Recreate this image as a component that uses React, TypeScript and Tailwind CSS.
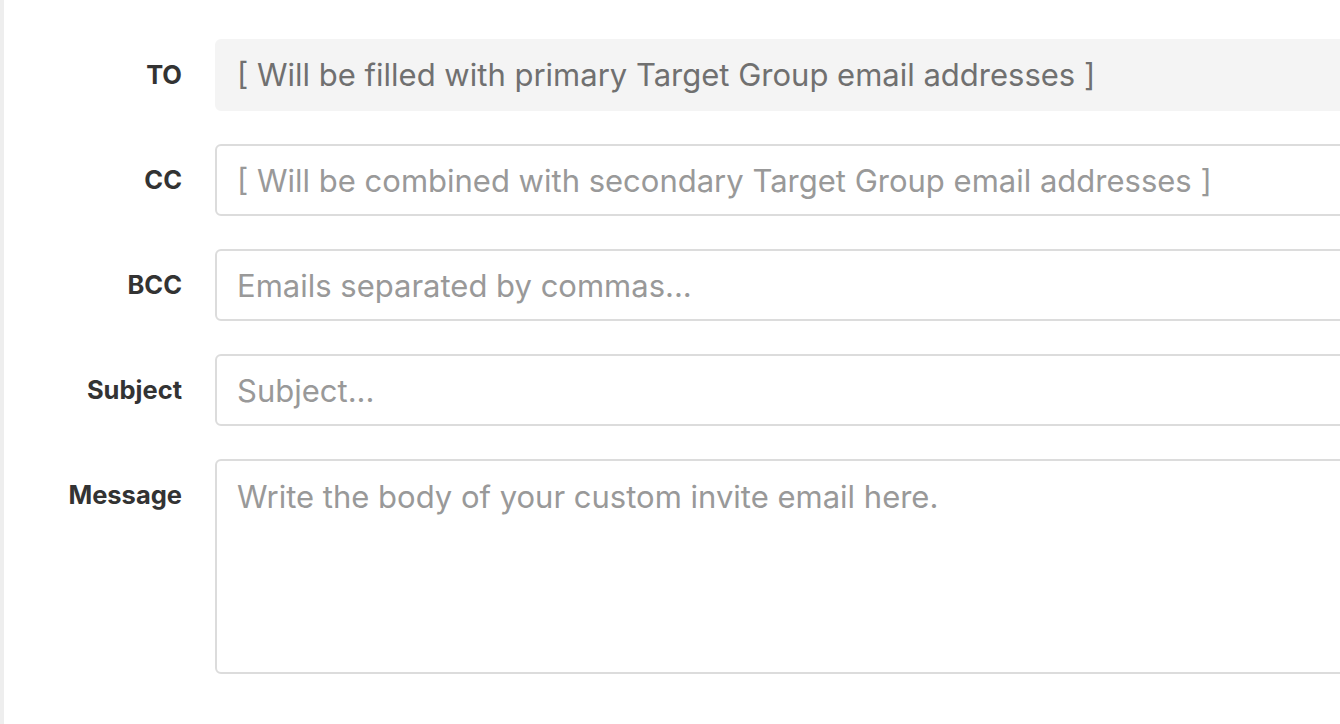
import React from "react";

const font = { fontFamily: "Inter, 'Noto Sans', sans-serif" };

function Row({ label, children }: { label: string; children: React.ReactNode }) {
  return (
    <div className="flex items-start gap-[33px]">
      <div className="w-[182px] shrink-0 h-[72px] flex items-center justify-end text-[25.5px] font-bold text-[#333333]">
        {label}
      </div>
      <div className="w-[1200px] shrink-0">{children}</div>
    </div>
  );
}

export default function App() {
  return (
    <div className="w-[1340px] h-[724px] overflow-hidden bg-white flex" style={font}>
      <div className="w-[4px] shrink-0 bg-[#eeeeee]" />
      <div className="flex flex-col gap-[33px] pt-[39px] -ml-[4px]">
        <Row label="TO">
          <div className="h-[72px] rounded-[6px] bg-[#f4f4f4] border-2 border-[#f4f4f4] px-[20px] flex items-center text-[31px] text-[#707070] whitespace-nowrap">
            [ Will be filled with primary Target Group email addresses ]
          </div>
        </Row>
        <Row label="CC">
          <input
            readOnly
            placeholder="[ Will be combined with secondary Target Group email addresses ]"
            className="h-[72px] w-full rounded-[6px] border-2 border-[#dcdcdc] px-[20px] text-[31px] outline-none placeholder:text-[#999999]"
          />
        </Row>
        <Row label="BCC">
          <input
            placeholder="Emails separated by commas..."
            className="h-[72px] w-full rounded-[6px] border-2 border-[#dcdcdc] px-[20px] text-[31px] outline-none placeholder:text-[#999999]"
          />
        </Row>
        <Row label="Subject">
          <input
            placeholder="Subject..."
            className="h-[72px] w-full rounded-[6px] border-2 border-[#dcdcdc] px-[20px] text-[31px] outline-none placeholder:text-[#999999]"
          />
        </Row>
        <Row label="Message">
          <textarea
            placeholder="Write the body of your custom invite email here."
            className="block h-[215px] w-full resize-none rounded-[6px] border-2 border-[#dcdcdc] px-[20px] py-[16px] text-[31px] leading-[1.3] outline-none placeholder:text-[#999999]"
          />
        </Row>
      </div>
    </div>
  );
}
